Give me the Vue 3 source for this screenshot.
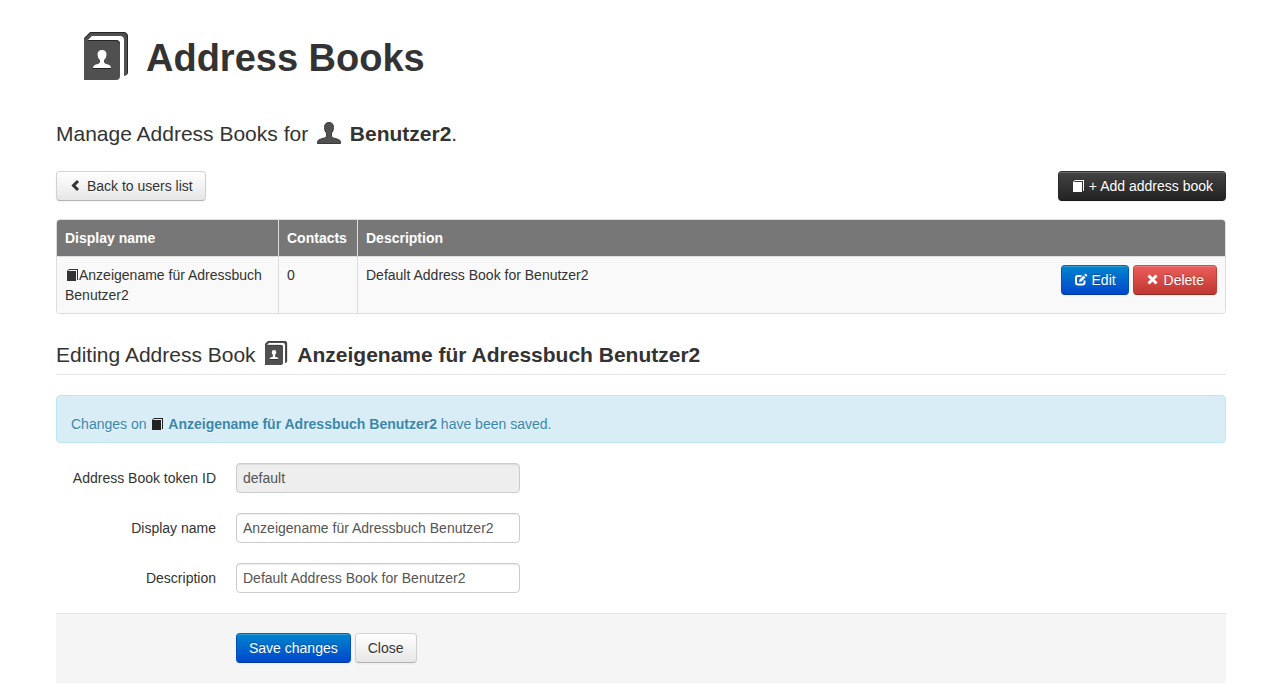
<script setup>
import { ref, h } from 'vue'

const user = 'Benutzer2'
const book = ref({
  id: 'default',
  name: 'Anzeigename für Adressbuch Benutzer2',
  description: 'Default Address Book for Benutzer2',
  contacts: 0,
})
const savedName = book.value.name
const savedDescription = book.value.description

const BookIcon = () =>
  h('svg', { viewBox: '0 0 48 48', 'aria-hidden': 'true' }, [
    h('path', {
      fill: '#505050',
      d: 'M2 6L8 0H41Q46 0 46 5V41Q46 43 42 44V8Q42 4 38 4H10L6 8H34Q38 8 38 12V44Q38 48 34 48H2Z',
    }),
    h('path', {
      fill: 'none',
      stroke: '#262626',
      d: 'M2.5 6.5L8.5 .5H41Q45.5 .5 45.5 5V41M6 8.5H34Q37.5 8.5 37.5 12',
    }),
    h('path', {
      fill: '#fff',
      d: 'M20 18Q15.500 18 15.500 22.500Q15.500 26 18 28V30.500Q17 32 14 32.500Q11 33.500 11 36H29Q29 33.500 26 32.500Q23 32 22 30.500V28Q24.500 26 24.500 22.500Q24.500 18 20 18Z',
    }),
    h('path', { fill: '#222', d: 'M11 36H29V37H11Z' }),
  ])

const SmallBook = () =>
  h('svg', { viewBox: '0 0 14 14', 'aria-hidden': 'true' }, [
    h('path', { fill: 'currentColor', d: 'M2 3L4 1H13V12H12V2H4L3 3H11V13H2Z' }),
  ])
</script>

<template>
  <main class="page">
    <h1 class="title"><BookIcon class="icon-48" />Address Books</h1>

    <p class="lead">
      Manage Address Books for
      <svg class="icon-24" viewBox="0 0 24 24" aria-hidden="true">
        <path
          fill="#505050"
          stroke="#3a3a3a"
          d="M12 1.500Q7.500 1.500 7.500 6.500Q7.500 10 9.500 12V15.500Q8.500 17 4 18Q.5 19 .5 20.500V22.500H23.500V20.500Q23.500 19 20 18Q15.500 17 14.500 15.500V12Q16.500 10 16.500 6.500Q16.500 1.500 12 1.500Z"
        />
      </svg>
      {{ ' ' }}<strong>{{ user }}</strong>.
    </p>

    <div class="toolbar">
      <a class="btn" href="#users">
        <svg class="icon" viewBox="0 0 14 14" aria-hidden="true">
          <path fill="none" stroke="currentColor" stroke-width="3" d="M9 2L4.500 6.500L9 11" />
        </svg>
        Back to users list
      </a>
      <a class="btn inverse" href="#new"><SmallBook class="icon" /> + Add address book</a>
    </div>

    <table class="books">
      <thead>
        <tr>
          <th class="name" scope="col">Display name</th>
          <th class="count" scope="col">Contacts</th>
          <th colspan="2" scope="colgroup">Description</th>
        </tr>
      </thead>
      <tbody>
        <tr>
          <td><SmallBook class="icon" />{{ savedName }}</td>
          <td>{{ book.contacts }}</td>
          <td>{{ savedDescription }}</td>
          <td class="actions">
            <div class="buttons">
              <a class="btn primary" href="#edit">
                <svg class="icon" viewBox="0 0 14 14" aria-hidden="true">
                  <path
                    fill="none"
                    stroke="currentColor"
                    stroke-width="2"
                    d="M7.500 3H3.500Q2 3 2 4.500V9.500Q2 11.500 4 11.500H8.500Q10.500 11.500 10.500 9.500V7.500"
                  />
                  <path fill="currentColor" d="M5 9L5.500 6.500L9.500 2.500L11.500 4.500L7.500 8.500ZM10.200 1.800L11.500 .5L13.500 2.500L12.200 3.800Z" />
                </svg>
                Edit
              </a>
              <a class="btn danger" href="#delete">
                <svg class="icon" viewBox="0 0 14 14" aria-hidden="true">
                  <path fill="none" stroke="currentColor" stroke-width="3" d="M2.500 2.500L10.500 10.500M10.500 2.500L2.500 10.500" />
                </svg>
                Delete
              </a>
            </div>
          </td>
        </tr>
      </tbody>
    </table>

    <h2 class="legend">
      Editing Address Book <BookIcon class="icon-24" /> <strong>{{ savedName }}</strong>
    </h2>

    <div class="alert" role="status">
      Changes on <SmallBook class="icon dark" /> <strong>{{ savedName }}</strong> have been saved.
    </div>

    <form @submit.prevent>
      <div class="field">
        <label for="book-id">Address Book token ID</label>
        <input id="book-id" type="text" :value="book.id" disabled />
      </div>
      <div class="field">
        <label for="book-name">Display name</label>
        <input id="book-name" v-model="book.name" type="text" />
      </div>
      <div class="field">
        <label for="book-description">Description</label>
        <input id="book-description" v-model="book.description" type="text" />
      </div>
      <div class="form-actions">
        <button class="btn primary" type="submit">Save changes</button>
        <a class="btn" href="#close">Close</a>
      </div>
    </form>
  </main>
</template>

<style>
body {
  background: #fff;
}
</style>

<style scoped>
.page {
  padding: 32px 48px 12px 56px;
  font: 14px/20px "Liberation Sans", Arial, sans-serif;
  color: #333;
}
.page,
.page * {
  box-sizing: border-box;
}
.title {
  display: flex;
  align-items: flex-start;
  gap: 16px;
  margin: 0 0 35px;
  padding-left: 26px;
  font-size: 38px;
  line-height: 52px;
  font-weight: bold;
}
.icon-48 {
  width: 48px;
  height: 48px;
}
.icon-24 {
  display: inline-block;
  width: 24px;
  height: 24px;
  margin: 0 3px;
  vertical-align: -4px;
}
.icon {
  display: inline-block;
  width: 14px;
  height: 14px;
  margin-top: 1px;
  vertical-align: text-top;
}
.dark {
  color: #222;
}
.lead {
  margin: 0 0 22px;
  font-size: 21px;
  line-height: 30px;
}
.toolbar {
  display: flex;
  justify-content: space-between;
  margin-bottom: 18px;
}
.btn {
  display: inline-block;
  padding: 4px 12px;
  border: 1px solid;
  border-color: #d4d4d4 #d0d0d0 #b3b3b3;
  border-radius: 4px;
  background: linear-gradient(#fff, #e6e6e6);
  box-shadow: inset 0 1px 0 rgba(255, 255, 255, 0.2), 0 1px 2px rgba(0, 0, 0, 0.05);
  color: #333;
  font: inherit;
  text-decoration: none;
  text-shadow: 0 1px 1px rgba(255, 255, 255, 0.75);
  white-space: nowrap;
  cursor: pointer;
}
.primary,
.danger,
.inverse {
  color: #fff;
  text-shadow: 0 -1px 0 rgba(0, 0, 0, 0.25);
}
.primary {
  border-color: #0067b0 #0052b8 #003a9c;
  background: linear-gradient(#08c, #04c) border-box;
}
.danger {
  border-color: #c9504b #bd413b #942a25;
  background: linear-gradient(#ee5f5b, #bd362f) border-box;
}
.inverse {
  border-color: #333 #2a2a2a #1a1a1a;
  background: linear-gradient(#444, #222) border-box;
}
.books {
  width: 100%;
  margin-bottom: 20px;
  border: 1px solid #ddd;
  border-radius: 4px;
  border-collapse: separate;
  border-spacing: 0;
  table-layout: fixed;
  overflow: hidden;
}
th,
td {
  padding: 8px;
  text-align: left;
  vertical-align: top;
}
th {
  background: #777;
  color: #fff;
}
th + th,
td + td {
  border-left: 1px solid #ddd;
}
td {
  border-top: 1px solid #ddd;
  background: #f9f9f9;
}
td.actions {
  border-left: 0;
}
.name {
  width: 221px;
}
.count {
  width: 79px;
}
.buttons {
  display: flex;
  justify-content: flex-end;
  gap: 4px;
}
.legend {
  margin: 0 0 20px;
  padding-top: 2px;
  border-bottom: 1px solid #e5e5e5;
  font-size: 21px;
  line-height: 38px;
  font-weight: normal;
}
.legend .icon-24 {
  vertical-align: -3px;
}
.alert {
  margin-bottom: 20px;
  padding: 18px 14px 8px;
  border: 1px solid #bce8f1;
  border-radius: 4px;
  background: #d9edf7;
  color: #3a87ad;
  text-shadow: 0 1px 0 rgba(255, 255, 255, 0.5);
}
.field {
  display: flex;
  gap: 20px;
  margin-bottom: 20px;
}
.field label {
  width: 160px;
  padding-top: 5px;
  text-align: right;
}
.field input {
  width: 284px;
  height: 30px;
  padding: 4px 6px;
  border: 1px solid #ccc;
  border-radius: 4px;
  background: #fff;
  box-shadow: inset 0 1px 1px rgba(0, 0, 0, 0.075);
  color: #555;
  font: inherit;
}
.field input:disabled {
  background: #eee;
}
.form-actions {
  display: flex;
  gap: 4px;
  padding: 19px 20px 20px 180px;
  border-top: 1px solid #e5e5e5;
  background: #f5f5f5;
}
</style>
